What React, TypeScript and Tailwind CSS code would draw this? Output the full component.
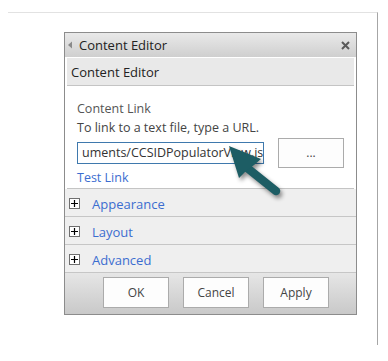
const Section = ({ label }: { label: string }) => (
  <div className="flex h-[28px] items-center border-b border-[#c6c6c6] bg-[#efefef]">
    <div className="ml-[4px] mt-[1px] flex h-[11px] w-[11px] items-center justify-center border border-[#6f6f6f] bg-white text-[11px] leading-none text-black">
      <svg width="7" height="7" viewBox="0 0 7 7">
        <path d="M0 3.5h7M3.5 0v7" stroke="#000" strokeWidth="1.2" />
      </svg>
    </div>
    <span className="ml-[12px] pt-[4px] text-[13px] text-[#3b6dd0]">{label}</span>
  </div>
);

const FooterButton = ({ label }: { label: string }) => (
  <button className="h-[31px] w-[66px] border border-[#ababab] bg-[#fdfdfd] pt-[1px] text-[12px] text-[#444]">
    {label}
  </button>
);

export default function App() {
  return (
    <div
      className="h-[361px] w-[388px] bg-white pl-[8px] pt-[12px]"
      style={{ fontFamily: '"Open Sans", "Noto Sans", sans-serif' }}
    >
      <div className="relative h-[333px] w-[370px] border-r border-t border-[#a6a6a6] border-t-[#e2e2e2]">
        <div className="ml-[56px] mt-[19px] flex h-[283px] w-[293px] flex-col border border-[#8c8c8c] bg-white">
          {/* Title bar */}
          <div className="flex h-[24px] items-center bg-gradient-to-b from-[#e9e9e9] to-[#cfcfcf] pl-[2px] pr-[6px]">
            <svg width="6" height="8" viewBox="0 0 6 8" className="mr-[6px]">
              <path d="M5 0.5L1 4l4 3.5z" fill="#8a8a8a" />
            </svg>
            <span className="flex-1 pt-[1px] text-[13px] text-[#222]">Content Editor</span>
            <svg width="9" height="9" viewBox="0 0 9 9">
              <path d="M1 1l7 7M8 1L1 8" stroke="#5a5a5a" strokeWidth="2" />
            </svg>
          </div>

          {/* Body */}
          <div className="px-[2px] pt-[1px]">
            <div className="flex h-[28px] items-center border-b border-[#c4c4c4] bg-[#e9e9e9] pl-[4px] pt-[2px] text-[13px] text-[#222]">
              Content Editor
            </div>
            <div className="border-b border-[#c4c4c4] pb-[1px] pl-[10px] pt-[13px]">
              <div className="text-[12.5px] leading-[19px] text-[#555]">Content Link</div>
              <div className="text-[12.5px] leading-[20px] text-[#444]">
                To link to a text file, type a URL.
              </div>
              <div className="flex items-start">
                <div className="mt-[4px] h-[22px] w-[187px] overflow-hidden whitespace-nowrap border border-[#3f79ad] bg-white px-[4px] text-[12.5px] leading-[20px] text-[#333]">
                  uments/CCSIDPopulatorView.js
                </div>
                <button className="ml-[14px] h-[30px] w-[66px] border border-[#ababab] bg-[#fdfdfd] text-[12px] text-[#444]">
                  ...
                </button>
              </div>
              <div className="text-[12.5px] leading-[19px] text-[#3b6dd0]">Test Link</div>
            </div>
          </div>

          <Section label="Appearance" />
          <Section label="Layout" />
          <Section label="Advanced" />

          {/* Footer */}
          <div className="flex flex-1 items-start gap-[14px] bg-gradient-to-b from-[#e6e6e6] to-[#c9c9c9] pl-[38px] pt-[4px]">
            <FooterButton label="OK" />
            <FooterButton label="Cancel" />
            <FooterButton label="Apply" />
          </div>
        </div>

        {/* Callout arrow */}
        <svg
          className="absolute left-0 top-0"
          width="370"
          height="333"
          style={{ filter: "drop-shadow(2px 3px 2px rgba(0,0,0,0.45))" }}
        >
          <path d="M238 154 L268 178" stroke="#1d5d64" strokeWidth="8.5" strokeLinecap="round" />
          <path d="M221 133 L231 165 L237 159 L246 152 L253 146 Z" fill="#1d5d64" />
        </svg>
      </div>
    </div>
  );
}
